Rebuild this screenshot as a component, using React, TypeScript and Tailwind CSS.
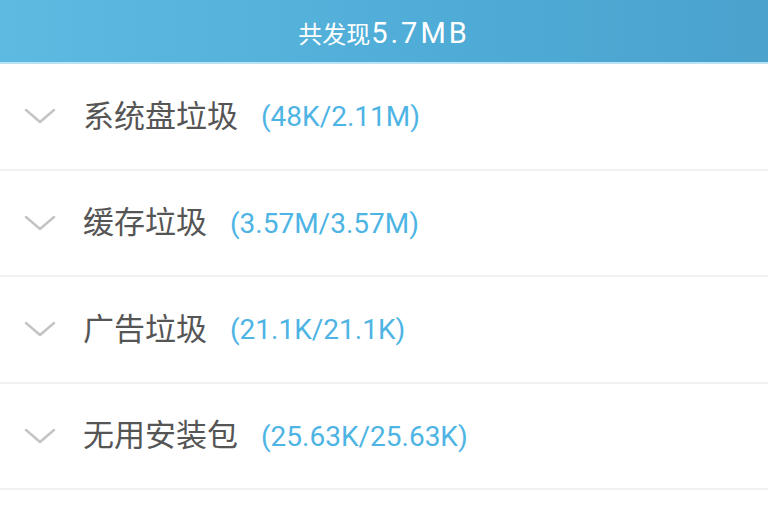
import React from "react";

interface JunkItem {
  name: string;
  size: string;
}

const items: JunkItem[] = [
  { name: "系统盘垃圾", size: "(48K/2.11M)" },
  { name: "缓存垃圾", size: "(3.57M/3.57M)" },
  { name: "广告垃圾", size: "(21.1K/21.1K)" },
  { name: "无用安装包", size: "(25.63K/25.63K)" },
];

const Chevron = () => (
  <svg width="32" height="16" viewBox="0 0 32 16" className="shrink-0">
    <path
      d="M2 2 L16 14 L30 2"
      fill="none"
      stroke="#c4c4c4"
      strokeWidth="2.5"
      strokeLinecap="round"
      strokeLinejoin="round"
    />
  </svg>
);

export default function App() {
  return (
    <div
      className="w-[768px] h-[510px] overflow-hidden bg-white"
      style={{ fontFamily: 'Roboto, "Noto Sans CJK SC", sans-serif' }}
    >
      <div className="h-[62px] flex items-center justify-center bg-gradient-to-r from-[#5dbbe2] via-[#50aed8] to-[#4aa2cd]">
        <span className="text-white leading-none pt-[4px] flex items-baseline">
          <span className="text-[24px]">共发现</span>
          <span className="text-[29px] tracking-[3px] ml-[1px]">5.7MB</span>
        </span>
      </div>
      <div className="h-[2px] bg-[#b9e2f2]" />

      {items.map((item) => (
        <div
          key={item.name}
          className="h-[106.5px] flex items-center pl-[24px] border-b-2 border-[#f1f1f1]"
        >
          <Chevron />
          <span className="ml-[27px] text-[31px] leading-none text-[#555555]">
            {item.name}
          </span>
          <span className="ml-[23px] text-[28px] leading-none text-[#4db4e4] pt-[2px]">
            {item.size}
          </span>
        </div>
      ))}
    </div>
  );
}
